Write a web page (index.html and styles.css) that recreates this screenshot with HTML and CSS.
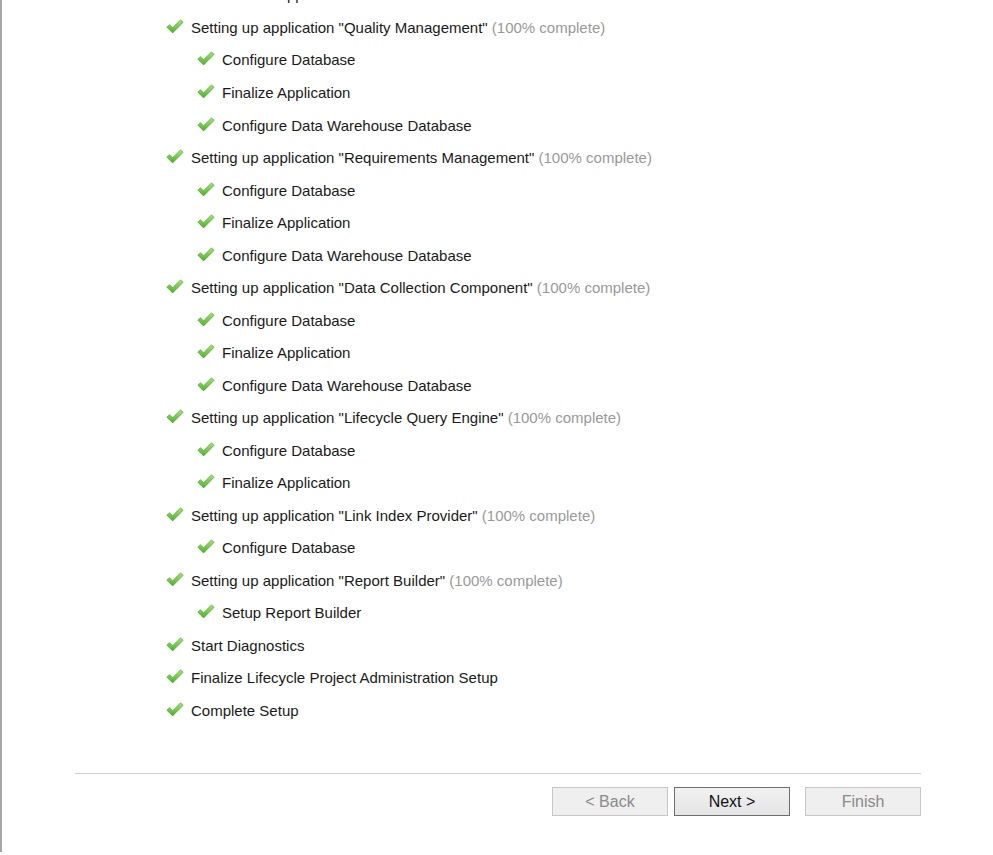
FILE: index.html
```html
<!DOCTYPE html>
<html lang="en">
<head>
<meta charset="utf-8"/>
<title>Setup Progress</title>
<meta content="width=device-width, initial-scale=1.0" name="viewport"/>
<link rel="stylesheet" href="styles.css">
</head>
<body>
<svg width="0" height="0" class="defs">
  <defs>
    <linearGradient id="ck" x1="0" y1="0" x2="0" y2="1">
      <stop offset="0" stop-color="#a6e873"/>
      <stop offset="1" stop-color="#4db02c"/>
    </linearGradient>
    <symbol id="check" viewBox="0 0 18 15">
      <path d="M0.9 8.2 L3.5 5.8 L6.6 8.8 L14.5 0.9 L17.1 3.3 L6.6 13.9 Z" fill="url(#ck)" stroke="#44a025" stroke-width="0.7" stroke-linejoin="round"/>
    </symbol>
  </defs>
</svg>
<div class="window">
  <div class="progress">
    <ul class="steps">
      <li class="step sub"><svg class="ok"><use href="#check"/></svg><span>Finalize Application</span></li>
      <li class="step"><svg class="ok"><use href="#check"/></svg><span>Setting up application "Quality Management" <em>(100% complete)</em></span></li>
      <li class="step sub"><svg class="ok"><use href="#check"/></svg><span>Configure Database</span></li>
      <li class="step sub"><svg class="ok"><use href="#check"/></svg><span>Finalize Application</span></li>
      <li class="step sub"><svg class="ok"><use href="#check"/></svg><span>Configure Data Warehouse Database</span></li>
      <li class="step"><svg class="ok"><use href="#check"/></svg><span>Setting up application "Requirements Management" <em>(100% complete)</em></span></li>
      <li class="step sub"><svg class="ok"><use href="#check"/></svg><span>Configure Database</span></li>
      <li class="step sub"><svg class="ok"><use href="#check"/></svg><span>Finalize Application</span></li>
      <li class="step sub"><svg class="ok"><use href="#check"/></svg><span>Configure Data Warehouse Database</span></li>
      <li class="step"><svg class="ok"><use href="#check"/></svg><span>Setting up application "Data Collection Component" <em>(100% complete)</em></span></li>
      <li class="step sub"><svg class="ok"><use href="#check"/></svg><span>Configure Database</span></li>
      <li class="step sub"><svg class="ok"><use href="#check"/></svg><span>Finalize Application</span></li>
      <li class="step sub"><svg class="ok"><use href="#check"/></svg><span>Configure Data Warehouse Database</span></li>
      <li class="step"><svg class="ok"><use href="#check"/></svg><span>Setting up application "Lifecycle Query Engine" <em>(100% complete)</em></span></li>
      <li class="step sub"><svg class="ok"><use href="#check"/></svg><span>Configure Database</span></li>
      <li class="step sub"><svg class="ok"><use href="#check"/></svg><span>Finalize Application</span></li>
      <li class="step"><svg class="ok"><use href="#check"/></svg><span>Setting up application "Link Index Provider" <em>(100% complete)</em></span></li>
      <li class="step sub"><svg class="ok"><use href="#check"/></svg><span>Configure Database</span></li>
      <li class="step"><svg class="ok"><use href="#check"/></svg><span>Setting up application "Report Builder" <em>(100% complete)</em></span></li>
      <li class="step sub"><svg class="ok"><use href="#check"/></svg><span>Setup Report Builder</span></li>
      <li class="step"><svg class="ok"><use href="#check"/></svg><span>Start Diagnostics</span></li>
      <li class="step"><svg class="ok"><use href="#check"/></svg><span>Finalize Lifecycle Project Administration Setup</span></li>
      <li class="step"><svg class="ok"><use href="#check"/></svg><span>Complete Setup</span></li>
    </ul>
  </div>
  <div class="footer">
    <button class="btn" disabled>&lt; Back</button>
    <button class="btn primary">Next &gt;</button>
    <button class="btn finish" disabled>Finish</button>
  </div>
</div>
</body>
</html>
```

FILE: styles.css
```css
html, body {
  margin: 0;
  padding: 0;
  background: #fff;
}
body {
  font-family: "Liberation Sans", Arial, sans-serif;
  font-size: 15px;
  color: #1a1a1a;
}
.defs {
  position: absolute;
  width: 0;
  height: 0;
}
.window {
  height: 852px;
  border-left: 2px solid #a6a6a6;
  overflow: hidden;
  box-sizing: border-box;
}
.progress {
  height: 773px;
  overflow: hidden;
}
.steps {
  list-style: none;
  margin: -21.3px 0 0;
  padding: 0 0 0 164px;
}
.step {
  height: 32.53px;
  display: flex;
  align-items: center;
  white-space: nowrap;
}
.step.sub { padding-left: 31px; }
.ok {
  width: 18px;
  height: 15px;
  margin: -2px 7px 0 0;
  flex: none;
}
.step em {
  font-style: normal;
  color: #999;
}
.footer {
  margin: 0 72px 0 73px;
  border-top: 1px solid #cfcfcf;
  padding-top: 13px;
  display: flex;
  justify-content: flex-end;
}
.btn {
  width: 116px;
  height: 29px;
  font-family: inherit;
  font-size: 16px;
  color: #8a8a8a;
  background: #efefef;
  border: 1px solid #c7c7c7;
  margin-left: 6px;
  padding: 0;
}
.btn.primary {
  color: #111;
  border-color: #6e6e6e;
  background: linear-gradient(#f2f2f2, #e4e4e4);
}
.btn.finish { margin-left: 15px; }
```
